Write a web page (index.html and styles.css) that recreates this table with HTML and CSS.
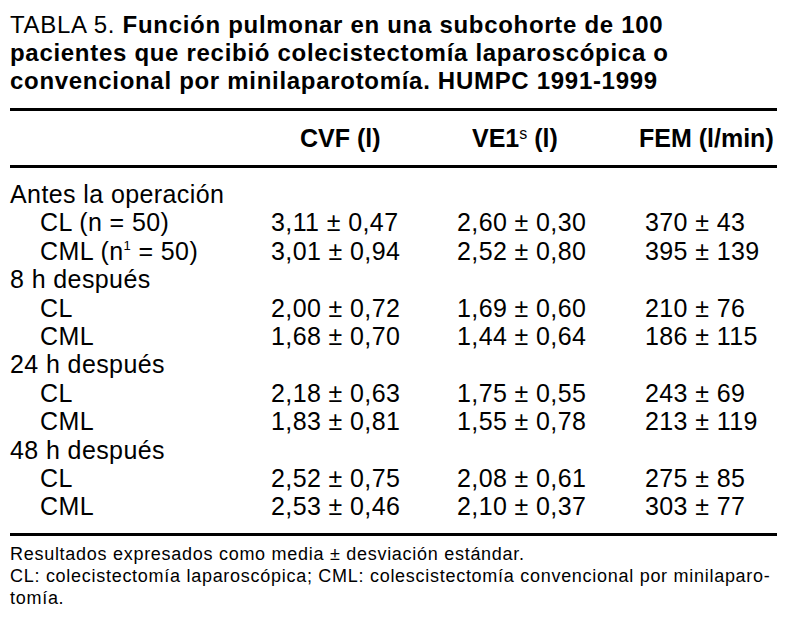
FILE: index.html
```html
<!DOCTYPE html>
<html lang="es">
<head>
<meta charset="utf-8">
<title>Tabla 5</title>
<link rel="stylesheet" href="styles.css">
</head>
<body>
<div class="page">
  <h1 class="title"><span class="lead">TABLA 5.</span> Función pulmonar en una subcohorte de 100 pacientes que recibió colecistectomía laparoscópica o convencional por minilaparotomía. HUMPC 1991-1999</h1>
  <div class="rule"></div>
  <div class="head">
    <span></span>
    <span>CVF (l)</span>
    <span>VE1<sup class="sup-s">s</sup> (l)</span>
    <span>FEM (l/min)</span>
  </div>
  <div class="rule"></div>
  <div class="body">
    <div class="row"><span class="grp">Antes la operación</span><span></span><span></span><span></span></div>
    <div class="row"><span class="sub">CL (n = 50)</span><span>3,11 ± 0,47</span><span>2,60 ± 0,30</span><span>370 ± 43</span></div>
    <div class="row"><span class="sub">CML (n<sup class="sup-1">1</sup> = 50)</span><span>3,01 ± 0,94</span><span>2,52 ± 0,80</span><span>395 ± 139</span></div>
    <div class="row"><span class="grp">8 h después</span><span></span><span></span><span></span></div>
    <div class="row"><span class="sub">CL</span><span>2,00 ± 0,72</span><span>1,69 ± 0,60</span><span>210 ± 76</span></div>
    <div class="row"><span class="sub">CML</span><span>1,68 ± 0,70</span><span>1,44 ± 0,64</span><span>186 ± 115</span></div>
    <div class="row"><span class="grp">24 h después</span><span></span><span></span><span></span></div>
    <div class="row"><span class="sub">CL</span><span>2,18 ± 0,63</span><span>1,75 ± 0,55</span><span>243 ± 69</span></div>
    <div class="row"><span class="sub">CML</span><span>1,83 ± 0,81</span><span>1,55 ± 0,78</span><span>213 ± 119</span></div>
    <div class="row"><span class="grp">48 h después</span><span></span><span></span><span></span></div>
    <div class="row"><span class="sub">CL</span><span>2,52 ± 0,75</span><span>2,08 ± 0,61</span><span>275 ± 85</span></div>
    <div class="row"><span class="sub">CML</span><span>2,53 ± 0,46</span><span>2,10 ± 0,37</span><span>303 ± 77</span></div>
  </div>
  <div class="rule"></div>
  <div class="notes">
    <p>Resultados expresados como media ± desviación estándar.</p>
    <p>CL: colecistectomía laparoscópica; CML: colescistectomía convencional por minilaparo-<br>tomía.</p>
  </div>
</div>
</body>
</html>
```
FILE: styles.css
```css
html, body {
  margin: 0;
  padding: 0;
  background: #fff;
}
body {
  font-family: "Liberation Sans", Arial, sans-serif;
  color: #000;
}
.page {
  width: 767px;
  padding: 11px 0 0 10px;
}
.title {
  margin: 0;
  font-size: 24px;
  letter-spacing: 0.7px;
  line-height: 28px;
  font-weight: bold;
  width: 720px;
}
.title .lead {
  font-weight: normal;
}
.rule {
  height: 3px;
  background: #000;
}
.title + .rule {
  margin-top: 13px;
}
.head {
  display: grid;
  grid-template-columns: 290px 172px 167px 1fr;
  font-size: 25px;
  font-weight: bold;
  line-height: 30px;
  padding: 12px 0 12px;
  white-space: nowrap;
}
.sup-s {
  font-size: 16px;
  vertical-align: 8px;
  line-height: 0;
  font-weight: normal;
}
.sup-1 {
  font-size: 13px;
  vertical-align: 10px;
  line-height: 0;
}
.body {
  padding: 12px 0 12px;
}
.row {
  display: grid;
  grid-template-columns: 261px 186px 188px 1fr;
  font-size: 25px;
  letter-spacing: 0.4px;
  line-height: 28.4px;
  white-space: nowrap;
}
.sub {
  padding-left: 30px;
}
.notes {
  padding-top: 7px;
  font-size: 18px;
  letter-spacing: 0.72px;
  line-height: 22px;
}
.notes p {
  margin: 0;
  white-space: nowrap;
}
```
